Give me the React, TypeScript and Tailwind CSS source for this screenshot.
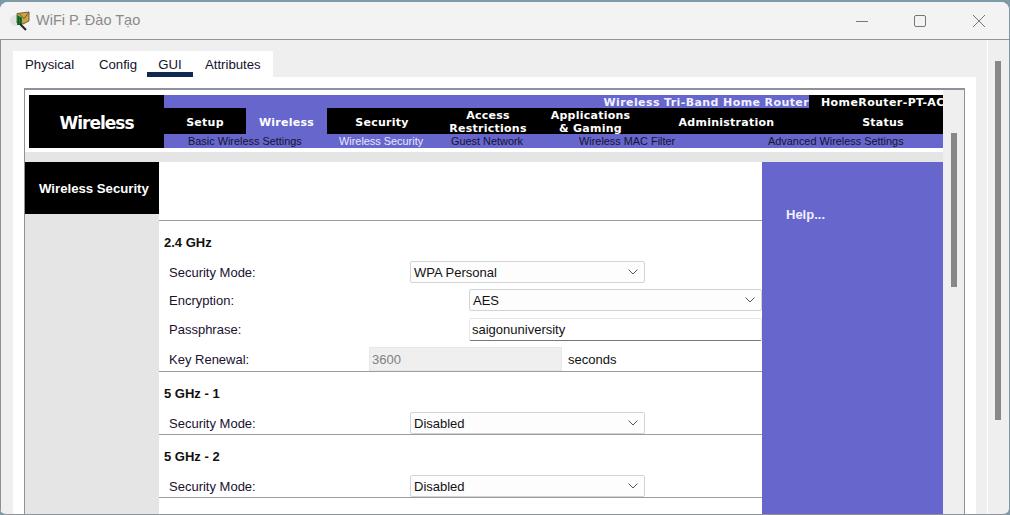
import React from "react";

const ar = "font-['Liberation_Sans',Arial,sans-serif]";
const dv = "font-['DejaVu_Sans',Verdana,sans-serif]";

function Chevron() {
  return (
    <svg width="10" height="6" viewBox="0 0 10 6" fill="none" className="shrink-0">
      <path d="M0.5 0.5 L5 5 L9.5 0.5" stroke="#555" strokeWidth="1" />
    </svg>
  );
}

function Select({ value, className }: { value: string; className: string }) {
  return (
    <div className={`h-[22px] flex items-center justify-between pl-[3px] pr-[6px] bg-[#fdfdfd] border border-[#d4d4d4] rounded-[2px] text-[13px] text-[#111] ${className}`}>
      <span className="pt-[2px]">{value}</span>
      <Chevron />
    </div>
  );
}

function Label({ children, flat }: { children: React.ReactNode; flat?: boolean }) {
  return <div className={`w-[200px] pl-[10px] shrink-0 text-[13px] text-[#1a1030] ${flat ? "" : "pt-[2px]"}`}>{children}</div>;
}

function Heading({ children }: { children: React.ReactNode }) {
  return <div className="pl-[5px] h-[14px] text-[13px] font-bold text-[#111] leading-[16px]">{children}</div>;
}

function Rule() {
  return <div className="h-px bg-[#9c9c9c]" />;
}

const menu: { label: React.ReactNode; w: string; active?: boolean; extra?: string }[] = [
  { label: "Setup", w: "w-[82px]", extra: "pt-[3px]" },
  { label: "Wireless", w: "w-[81px]", active: true, extra: "pt-[3px]" },
  { label: "Security", w: "w-[110px]", extra: "pt-[3px]" },
  { label: <>Access<br />Restrictions</>, w: "w-[102px]", extra: "pt-[1px]" },
  { label: <>Applications<br />&amp; Gaming</>, w: "w-[103px]", extra: "pt-[1px]" },
  { label: "Administration", w: "w-[169px]", extra: "pt-[3px]" },
  { label: "Status", w: "w-[132px]", extra: "pl-[12px] pt-[3px]" },
];

export default function App() {
  return (
    <div className={`w-[1010px] h-[515px] overflow-hidden bg-[#7f9aa6] pt-[2px] ${ar}`}>
      <div className="w-[1009px] h-[513px] rounded-t-[8px] rounded-b-[6px] overflow-hidden bg-[#efefef] flex flex-col border-b border-[#8f9299]">
        {/* title bar */}
        <div className="h-[38px] shrink-0 bg-[#f3f3f3] border-b border-[#8f9299] flex items-center pl-[10px]">
          <svg width="20" height="20" viewBox="0 0 20 20" className="shrink-0">
            <circle cx="5.5" cy="9.5" r="5.5" fill="#dfe3e3" />
            <path d="M7 2.5 L19 1 L19 10 L13 13 L7 12 Z" fill="#c9a44a" stroke="#5a4616" strokeWidth="0.8" />
            <path d="M9 2.5 L14 7.5 L19 1.5" fill="none" stroke="#5a4616" strokeWidth="0.8" />
            <path d="M7 4 L12 6.5 V14 H7 Z" fill="#1f7d35" />
            <path d="M8.5 5 V14 M10.5 6 V14 M7 8 H12 M7 11 H12" stroke="#0d4a1c" strokeWidth="0.5" />
            <path d="M10 13 L16 19" stroke="#222" strokeWidth="2" />
          </svg>
          <span className="ml-[6px] text-[14.5px] text-[#8a8a8a]">WiFi P. Đào Tạo</span>
          <div className="ml-auto flex items-center">
            <svg width="14" height="14" viewBox="0 0 14 14" className="mr-[44px]">
              <path d="M1 7.5 H13" stroke="#777" strokeWidth="1" />
            </svg>
            <svg width="14" height="14" viewBox="0 0 14 14" className="mr-[45px]">
              <rect x="1.5" y="1.5" width="11" height="11" rx="1.5" fill="none" stroke="#777" strokeWidth="1" />
            </svg>
            <svg width="14" height="14" viewBox="0 0 14 14" className="mr-[23px]">
              <path d="M1 1 L13 13 M13 1 L1 13" stroke="#777" strokeWidth="1" />
            </svg>
          </div>
        </div>

        {/* body */}
        <div className="flex-1 min-h-0 flex border-l border-[#8a8f94]">
          <div className="w-[986px] shrink-0 pl-[12px] pr-[11px] pt-[11px] flex flex-col">
            {/* tabs */}
            <div className="h-[26px] w-[260px] shrink-0 bg-white flex text-[13.2px] text-[#12122a]">
              <div className="w-[74px] pl-[12px] pt-[4px]">Physical</div>
              <div className="w-[60px] pl-[12px] pt-[4px]">Config</div>
              <div className="w-[46px] h-[26px] text-center pt-[4px] border-b-[5px] border-[#0f2a52]">GUI</div>
              <div className="pl-[12px] pt-[4px]">Attributes</div>
            </div>
            {/* white panel */}
            <div className="flex-1 min-h-0 bg-white pl-[11px] pr-[11px] pt-[11px]">
              <div className="h-full border-t-2 border-l border-r border-[#8f8fa0] flex">
                <div className="w-[918px] shrink-0 flex flex-col overflow-hidden">
                  {/* header */}
                  <div className="h-[5px] shrink-0" />
                  <div className="ml-[4px] h-[53px] shrink-0 flex bg-black text-white">
                    <div className={`w-[135px] shrink-0 flex items-center justify-center pt-[4px] text-[17px] font-bold ${dv} tracking-[-1px]`}>Wireless</div>
                    <div className="flex-1 flex flex-col min-w-0">
                      <div className="h-[13px] flex">
                        <div className={`w-[645px] bg-[#6666cc] text-right text-[11px] leading-[15px] font-bold tracking-[0.4px] text-[#f0f0ff] ${dv}`}>Wireless Tri-Band Home Router</div>
                        <div className={`flex-1 pl-[12px] text-[11px] leading-[15px] font-bold tracking-[0.4px] whitespace-nowrap overflow-hidden ${dv}`}>HomeRouter-PT-AC</div>
                      </div>
                      <div className={`h-[26px] flex text-[11px] leading-[13px] font-bold text-center tracking-[0.25px] ${dv}`}>
                        {menu.map((m, i) => (
                          <div key={i} className={`${m.w} shrink-0 flex items-center justify-center ${m.active ? "bg-[#6666cc]" : ""} ${m.extra ?? ""}`}>
                            <span>{m.label}</span>
                          </div>
                        ))}
                      </div>
                      <div className="h-[14px] bg-[#6666cc] flex text-[10.9px] leading-[14px] text-[#14142e] whitespace-nowrap">
                        <span className="ml-[24px] w-[151px]">Basic Wireless Settings</span>
                        <span className="w-[112px] text-[#e8e8ff]">Wireless Security</span>
                        <span className="w-[128px]">Guest Network</span>
                        <span className="w-[189px]">Wireless MAC Filter</span>
                        <span>Advanced Wireless Settings</span>
                      </div>
                    </div>
                  </div>
                  <div className="h-[4px] shrink-0" />
                  <div className="h-[10px] shrink-0 bg-[#e5e5e5]" />
                  {/* main */}
                  <div className="flex-1 min-h-0 flex">
                    <div className="w-[134px] shrink-0 bg-[#e5e5e5]">
                      <div className="h-[52px] bg-black text-white text-[13.2px] font-bold flex items-center pl-[14px] pt-[2px]">
                        Wireless Security
                      </div>
                    </div>
                    <div className="w-[603px] shrink-0 bg-white flex flex-col">
                      <div className="h-[58px] shrink-0" />
                      <Rule />
                      <div className="pt-[14px]"><Heading>2.4 GHz</Heading></div>
                      <div className="mt-[12px] flex items-center h-[22px]">
                        <Label>Security Mode:</Label>
                        <Select value="WPA Personal" className="ml-[51px] w-[235px]" />
                      </div>
                      <div className="mt-[6px] flex items-center h-[22px]">
                        <Label>Encryption:</Label>
                        <Select value="AES" className="ml-[110px] w-[293px] shrink-0" />
                      </div>
                      <div className="mt-[7px] flex items-center h-[23px]">
                        <Label flat>Passphrase:</Label>
                        <div className="ml-[110px] w-[293px] shrink-0 h-[23px] flex items-center pl-[2px] bg-white border border-[#e6e6e6] border-b-[#777] rounded-[2px] text-[13px] text-[#111]">saigonuniversity</div>
                      </div>
                      <div className="mt-[6px] flex items-center h-[24px]">
                        <Label>Key Renewal:</Label>
                        <div className="ml-[10px] w-[193px] shrink-0 h-[24px] flex items-center pl-[2px] pt-[2px] bg-[#efefef] border border-[#e8e8e8] text-[13px] text-[#808080]">3600</div>
                        <span className="ml-[6px] pt-[2px] text-[13px] text-[#111]">seconds</span>
                      </div>
                      <Rule />
                      <div className="pt-[14px]"><Heading>5 GHz - 1</Heading></div>
                      <div className="mt-[12px] flex items-center h-[22px]">
                        <Label>Security Mode:</Label>
                        <Select value="Disabled" className="ml-[51px] w-[235px]" />
                      </div>
                      <Rule />
                      <div className="pt-[14px]"><Heading>5 GHz - 2</Heading></div>
                      <div className="mt-[12px] flex items-center h-[22px]">
                        <Label>Security Mode:</Label>
                        <Select value="Disabled" className="ml-[51px] w-[235px]" />
                      </div>
                      <Rule />
                    </div>
                    <div className="flex-1 bg-[#6666cc] pl-[24px] pt-[43px] text-[13px] font-bold text-[#f0f0ff]">Help...</div>
                  </div>
                </div>
                {/* inner scrollbar */}
                <div className="flex-1 bg-[#efefef] pl-[8px] pt-[43px]">
                  <div className="w-[6px] h-[154px] bg-[#888]" />
                </div>
              </div>
            </div>
          </div>
          {/* outer scrollbar */}
          <div className="flex-1 border-l border-white pl-[7px] pt-[21px]">
            <div className="w-[6px] h-[359px] bg-[#888]" />
          </div>
        </div>
      </div>
    </div>
  );
}
